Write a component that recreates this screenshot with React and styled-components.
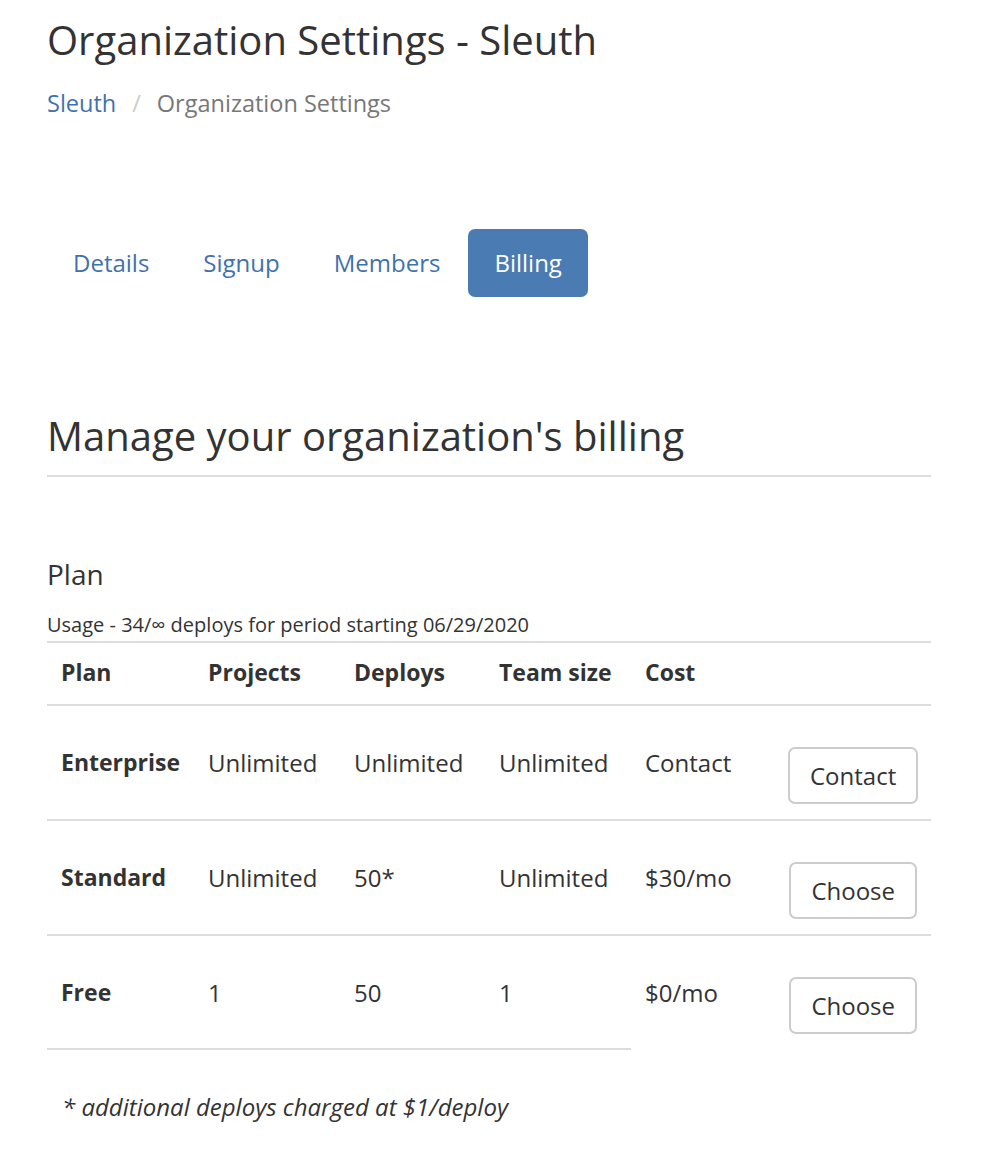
import styled, { createGlobalStyle } from "styled-components";

const GlobalStyle = createGlobalStyle`
  body {
    margin: 0;
    background: #fff;
    font-family: "Open Sans", "Liberation Sans", sans-serif;
    color: #333;
  }
`;

const Page = styled.div`
  padding: 14px 67px 40px 47px;
`;

const Title = styled.h1`
  margin: 0;
  font-size: 40px;
  font-weight: 400;
  line-height: 52px;
  color: #333;
`;

const Crumbs = styled.div`
  display: flex;
  gap: 16px;
  margin-top: 21px;
  font-size: 23.5px;
  line-height: 32px;
  color: #777;
`;

const CrumbLink = styled.a`
  color: #3f72ad;
  text-decoration: none;
`;

const Sep = styled.span`
  color: #ccc;
`;

const Tabs = styled.ul`
  display: flex;
  gap: 2px;
  list-style: none;
  margin: 110px 0 0;
  padding: 0;
`;

const Tab = styled.li`
  padding: 17px 26px;
  font-size: 24px;
  line-height: 34px;
  border-radius: 7px;
  color: ${(p) => (p.active ? "#fff" : "#3f72ad")};
  background: ${(p) => (p.active ? "#4a7bb3" : "transparent")};
`;

const Heading = styled.h2`
  margin: 114px 0 0;
  font-size: 40px;
  font-weight: 400;
  line-height: 50px;
  padding-bottom: 14px;
  border-bottom: 2px solid #ddd;
`;

const SubHeading = styled.h3`
  margin: 79px 0 0;
  font-size: 28px;
  font-weight: 400;
  line-height: 36px;
`;

const Usage = styled.div`
  margin-top: 20px;
  font-size: 20px;
  line-height: 26px;
  padding-bottom: 3px;
`;

const Table = styled.table`
  width: 100%;
  table-layout: fixed;
  border-collapse: collapse;
  font-size: 24px;
  line-height: 31px;
`;

const Th = styled.th`
  box-sizing: border-box;
  text-align: left;
  font-size: 23px;
  font-weight: 700;
  padding: 14px 14px 16px;
  border-top: 2px solid #ddd;
  border-bottom: 2px solid #ddd;
  width: ${(p) => p.w || "auto"};
`;

const Td = styled.td`
  vertical-align: top;
  padding: 41px 14px 15px;
  font-size: ${(p) => (p.bold ? "23px" : "24px")};
  font-weight: ${(p) => (p.bold ? 700 : 400)};
  white-space: nowrap;
  border-bottom: ${(p) => (p.noLine ? "none" : "2px solid #ddd")};
`;

const ActionCell = styled(Td)`
  text-align: right;
`;

const Button = styled.button`
  font-family: inherit;
  font-size: 24px;
  line-height: 31px;
  color: #333;
  background: #fff;
  border: 2px solid #ccc;
  border-radius: 7px;
  padding: 11px 20px;
  cursor: pointer;
`;

const Note = styled.p`
  margin: 41px 0 0 15px;
  font-size: 24px;
  line-height: 31px;
  font-style: italic;
`;

const plans = [
  { name: "Enterprise", projects: "Unlimited", deploys: "Unlimited", team: "Unlimited", cost: "Contact", action: "Contact" },
  { name: "Standard", projects: "Unlimited", deploys: "50*", team: "Unlimited", cost: "$30/mo", action: "Choose" },
  { name: "Free", projects: "1", deploys: "50", team: "1", cost: "$0/mo", action: "Choose" },
];

export default function App() {
  return (
    <>
      <GlobalStyle />
      <Page>
        <Title>Organization Settings - Sleuth</Title>
        <Crumbs>
          <CrumbLink href="#">Sleuth</CrumbLink>
          <Sep>/</Sep>
          <span>Organization Settings</span>
        </Crumbs>
        <Tabs>
          <Tab>Details</Tab>
          <Tab>Signup</Tab>
          <Tab>Members</Tab>
          <Tab active>Billing</Tab>
        </Tabs>
        <Heading>Manage your organization's billing</Heading>
        <SubHeading>Plan</SubHeading>
        <Usage>Usage - 34/∞ deploys for period starting 06/29/2020</Usage>
        <Table>
          <thead>
            <tr>
              <Th w="147px">Plan</Th>
              <Th w="146px">Projects</Th>
              <Th w="145px">Deploys</Th>
              <Th w="146px">Team size</Th>
              <Th w="143px">Cost</Th>
              <Th />
            </tr>
          </thead>
          <tbody>
            {plans.map((p, i) => {
              const last = i === plans.length - 1;
              return (
                <tr key={p.name}>
                  <Td bold>{p.name}</Td>
                  <Td>{p.projects}</Td>
                  <Td>{p.deploys}</Td>
                  <Td>{p.team}</Td>
                  <Td noLine={last}>{p.cost}</Td>
                  <ActionCell noLine={last}>
                    <Button>{p.action}</Button>
                  </ActionCell>
                </tr>
              );
            })}
          </tbody>
        </Table>
        <Note>* additional deploys charged at $1/deploy</Note>
      </Page>
    </>
  );
}
